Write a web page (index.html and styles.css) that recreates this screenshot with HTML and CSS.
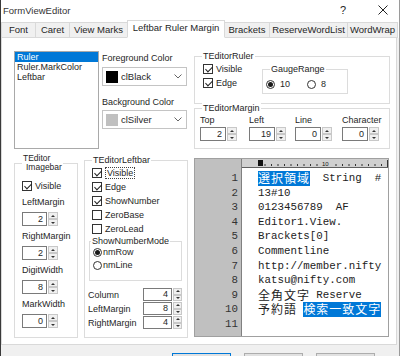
FILE: index.html
```html
<!DOCTYPE html>
<html lang="ja">
<head>
  <meta charset="UTF-8">
  <meta name="viewport" content="width=device-width, initial-scale=1.0">
  <title>FormViewEditor</title>
  <link rel="stylesheet" href="styles.css">
</head>
<body>
  <div class="window">
    <!-- title bar -->
    <div class="titlebar">
      <span class="title">FormViewEditor</span>
      <span class="help">?</span>
      <span class="close">
        <svg width="10" height="10" viewBox="0 0 10 10"><path d="M0.5 0.5L9.5 9.5M9.5 0.5L0.5 9.5" stroke="#222" stroke-width="1" fill="none"/></svg>
      </span>
    </div>

    <!-- tabs -->
    <div class="tabs">
      <div class="tab tab-font">Font</div>
      <div class="tab tab-caret">Caret</div>
      <div class="tab tab-marks">View Marks</div>
      <div class="tab tab-leftbar active">Leftbar Ruler Margin</div>
      <div class="tab tab-brackets">Brackets</div>
      <div class="tab tab-reserve">ReserveWordList</div>
      <div class="tab tab-wrap">WordWrap</div>
    </div>

    <div class="page">
      <div class="top-row">
        <div class="listbox">
          <div class="item selected">Ruler</div>
          <div class="item">Ruler.MarkColor</div>
          <div class="item">Leftbar</div>
        </div>

        <div class="colors">
          <div class="field-label">Foreground Color</div>
          <div class="combo">
            <span class="swatch black"></span>
            <span class="combo-text">clBlack</span>
            <svg class="chevron" width="8" height="5" viewBox="0 0 8 5"><polyline points="0.5,0.5 4,4 7.5,0.5" fill="none" stroke="#666" stroke-width="1"/></svg>
          </div>
          <div class="field-label second">Background Color</div>
          <div class="combo second">
            <span class="swatch silver"></span>
            <span class="combo-text">clSilver</span>
            <svg class="chevron" width="8" height="5" viewBox="0 0 8 5"><polyline points="0.5,0.5 4,4 7.5,0.5" fill="none" stroke="#666" stroke-width="1"/></svg>
          </div>
        </div>

        <div class="right-col">
          <div class="group ruler-group">
            <span class="group-label">TEditorRuler</span>
            <div class="checks">
              <div class="check-row"><span class="cb on"></span>Visible</div>
              <div class="check-row"><span class="cb on"></span>Edge</div>
            </div>
            <div class="group gauge">
              <span class="group-label">GaugeRange</span>
              <div class="radio-line">
                <span class="radio-opt first"><span class="rb on"></span>10</span>
                <span class="radio-opt"><span class="rb"></span>8</span>
              </div>
            </div>
          </div>

          <div class="group margin-group">
            <span class="group-label">TEditorMargin</span>
            <div class="margin-field w-top">
              <div class="field-label">Top</div>
              <div class="spin"><span class="spin-edit">2</span><span class="spin-btns"><span class="up"></span><span class="down"></span></span></div>
            </div>
            <div class="margin-field w-left">
              <div class="field-label">Left</div>
              <div class="spin"><span class="spin-edit">19</span><span class="spin-btns"><span class="up"></span><span class="down"></span></span></div>
            </div>
            <div class="margin-field w-line">
              <div class="field-label">Line</div>
              <div class="spin"><span class="spin-edit">0</span><span class="spin-btns"><span class="up"></span><span class="down"></span></span></div>
            </div>
            <div class="margin-field">
              <div class="field-label">Character</div>
              <div class="spin"><span class="spin-edit">0</span><span class="spin-btns"><span class="up"></span><span class="down"></span></span></div>
            </div>
          </div>
        </div>
      </div>

      <div class="bottom-row">
        <div class="group imagebar">
          <span class="group-label two-line"><span>TEditor</span><span class="indent">Imagebar</span></span>
          <div class="check-row"><span class="cb on"></span>Visible</div>
          <div class="field-label stacked">LeftMargin</div>
          <div class="spin small"><span class="spin-edit">2</span><span class="spin-btns"><span class="up"></span><span class="down"></span></span></div>
          <div class="field-label stacked">RightMargin</div>
          <div class="spin small"><span class="spin-edit">2</span><span class="spin-btns"><span class="up"></span><span class="down"></span></span></div>
          <div class="field-label stacked">DigitWidth</div>
          <div class="spin small"><span class="spin-edit">8</span><span class="spin-btns"><span class="up"></span><span class="down"></span></span></div>
          <div class="field-label stacked">MarkWidth</div>
          <div class="spin small"><span class="spin-edit">0</span><span class="spin-btns"><span class="up"></span><span class="down"></span></span></div>
        </div>

        <div class="group leftbar">
          <span class="group-label">TEditorLeftbar</span>
          <div class="check-row indent"><span class="cb on"></span><span class="focus">Visible</span></div>
          <div class="check-row indent"><span class="cb on"></span>Edge</div>
          <div class="check-row indent"><span class="cb on"></span>ShowNumber</div>
          <div class="check-row indent"><span class="cb"></span>ZeroBase</div>
          <div class="check-row indent"><span class="cb"></span>ZeroLead</div>
          <div class="group mode">
            <span class="group-label">ShowNumberMode</span>
            <div class="radio-row"><span class="rb on"></span>nmRow</div>
            <div class="radio-row"><span class="rb"></span>nmLine</div>
          </div>
          <div class="spin-row first">
            <span class="row-label">Column</span>
            <div class="spin wide"><span class="spin-edit">4</span><span class="spin-btns"><span class="up"></span><span class="down"></span></span></div>
          </div>
          <div class="spin-row">
            <span class="row-label">LeftMargin</span>
            <div class="spin wide"><span class="spin-edit">8</span><span class="spin-btns"><span class="up"></span><span class="down"></span></span></div>
          </div>
          <div class="spin-row">
            <span class="row-label">RightMargin</span>
            <div class="spin wide"><span class="spin-edit">4</span><span class="spin-btns"><span class="up"></span><span class="down"></span></span></div>
          </div>
        </div>

        <div class="editor">
          <div class="gutter">
            <div class="line">1</div><div class="line">2</div><div class="line">3</div>
            <div class="line">4</div><div class="line">5</div><div class="line">6</div>
            <div class="line">7</div><div class="line">8</div><div class="line">9</div>
            <div class="line">10</div><div class="line">11</div>
          </div>
          <div class="editor-main">
            <div class="ruler">
              <svg width="146" height="8" viewBox="0 0 146 8">
                <rect x="16" y="1" width="5" height="6" fill="#111"/>
                <text x="80" y="6.5" font-size="6" font-family="Liberation Sans, sans-serif" fill="#111">10</text>
                <g stroke="#333" stroke-width="1">
                  <line x1="23" y1="5" x2="23" y2="7"/><line x1="29.5" y1="5" x2="29.5" y2="7"/>
                  <line x1="36" y1="5" x2="36" y2="7"/><line x1="42.5" y1="5" x2="42.5" y2="7"/>
                  <line x1="49" y1="5" x2="49" y2="7"/><line x1="55.5" y1="5" x2="55.5" y2="7"/>
                  <line x1="62" y1="5" x2="62" y2="7"/><line x1="68.5" y1="5" x2="68.5" y2="7"/>
                  <line x1="75" y1="5" x2="75" y2="7"/>
                  <line x1="94" y1="5" x2="94" y2="7"/><line x1="100.5" y1="5" x2="100.5" y2="7"/>
                  <line x1="107" y1="5" x2="107" y2="7"/><line x1="113.5" y1="5" x2="113.5" y2="7"/>
                  <line x1="120" y1="5" x2="120" y2="7"/><line x1="126.5" y1="5" x2="126.5" y2="7"/>
                  <line x1="133" y1="5" x2="133" y2="7"/><line x1="139.5" y1="5" x2="139.5" y2="7"/>
                  <line x1="145.5" y1="1" x2="145.5" y2="8"/>
                </g>
              </svg>
            </div>
            <div class="code">
              <div class="line"><span class="cjk sel">選択領域</span>  String  #</div>
              <div class="line">13#10</div>
              <div class="line">0123456789  AF</div>
              <div class="line">Editor1.View.</div>
              <div class="line">Brackets[0]</div>
              <div class="line">Commentline</div>
              <div class="line">http://member.nifty</div>
              <div class="line">katsu@nifty.com</div>
              <div class="line"><span class="cjk">全角文字</span> Reserve</div>
              <div class="line"><span class="cjk">予約語</span> <span class="cjk sel">検索一致文字</span></div>
              <div class="line"></div>
            </div>
          </div>
        </div>
      </div>
    </div>

    <div class="button-bar">
      <span class="btn default"></span>
      <span class="btn"></span>
      <span class="btn"></span>
    </div>
  </div>
</body>
</html>
```

FILE: styles.css
```css
* {
  box-sizing: border-box;
}
body {
  margin: 0;
  font-family: "Liberation Sans", Arial, sans-serif;
  font-size: 9px;
  color: #262626;
  background: #fff;
}
.window {
  width: 400px;
  height: 356px;
  overflow: hidden;
  background: #f0f0f0;
  border-left: 1px solid #3a3a3a;
  border-right: 1px solid #9a9a9a;
}

/* title bar */
.titlebar {
  height: 20px;
  background: #fff;
  display: flex;
  align-items: center;
  padding: 0 6px 0 2px;
  font-size: 9.5px;
}
.title {
  color: #333;
}
.help {
  margin-left: auto;
  width: 20px;
  text-align: center;
  font-size: 11px;
}
.close {
  width: 20px;
  margin-left: 20px;
  display: flex;
  justify-content: center;
}

/* tabs */
.tabs {
  height: 18px;
  display: flex;
  align-items: flex-end;
  background: #fff;
  margin-bottom: -1px;
  position: relative;
  z-index: 1;
  font-size: 9.5px;
}
.tab {
  height: 16px;
  line-height: 14px;
  text-align: center;
  border: 1px solid #d9d9d9;
  background: #f0f0f0;
  margin-right: -1px;
  white-space: nowrap;
}
.tab.active {
  height: 18px;
  background: #fff;
  border-bottom-color: #fff;
  position: relative;
  z-index: 2;
}
.tab-font { width: 35px; }
.tab-caret { width: 35px; }
.tab-marks { width: 59px; }
.tab-leftbar { width: 98px; }
.tab-brackets { width: 46px; }
.tab-reserve { width: 79px; }
.tab-wrap { width: 51px; }

/* page */
.page {
  width: 396px;
  height: 308px;
  background: #fff;
  border: 1px solid #d9d9d9;
}
.top-row {
  height: 111px;
  display: flex;
  align-items: flex-start;
  padding-left: 12px;
}
.bottom-row {
  display: flex;
  align-items: flex-start;
  padding-left: 12px;
}
.field-label {
  line-height: 12px;
  white-space: nowrap;
}

/* list box */
.listbox {
  margin-top: 13px;
  width: 85px;
  height: 98px;
  border: 1px solid #a9a9a9;
}
.item {
  height: 10px;
  line-height: 10px;
  padding-left: 2px;
}
.item.selected {
  background: #0078d7;
  color: #fff;
}

/* colour combos */
.colors {
  margin-top: 14px;
  margin-left: 3px;
  width: 85px;
}
.combo {
  margin-top: 3px;
  height: 19px;
  border: 1px solid #c4c4c4;
  display: flex;
  align-items: center;
  padding-left: 3px;
}
.combo.second {
  margin-top: 2px;
}
.field-label.second {
  margin-top: 10px;
}
.swatch {
  width: 12px;
  height: 12px;
  margin-right: 3px;
}
.swatch.black {
  background: #000;
}
.swatch.silver {
  background: #c0c0c0;
}
.combo-text {
  font-size: 9.5px;
}
.chevron {
  margin-left: auto;
  margin-right: 4px;
}

/* group boxes */
.group {
  position: relative;
  border: 1px solid #dcdcdc;
}
.group-label {
  position: absolute;
  top: -7px;
  left: 7px;
  padding: 0 1px;
  line-height: 12px;
  background: #fff;
  white-space: nowrap;
}
.right-col {
  margin-left: 7px;
  width: 196px;
}
.ruler-group {
  margin-top: 18px;
  height: 48px;
  display: flex;
  padding: 6px 0 0 8px;
}
.checks {
  width: 59px;
}
.check-row {
  height: 12px;
  margin-bottom: 2px;
  display: flex;
  align-items: center;
  white-space: nowrap;
}
.cb {
  position: relative;
  width: 10px;
  height: 10px;
  border: 1px solid #333;
  background: #fff;
  margin-right: 3px;
  flex: none;
}
.cb.on::after {
  content: "";
  position: absolute;
  left: 2.5px;
  top: 0;
  width: 3px;
  height: 6px;
  border: solid #222;
  border-width: 0 1px 1px 0;
  transform: rotate(45deg);
}
.focus {
  border: 1px dotted #444;
  line-height: 10px;
  padding: 0 1px;
}
.gauge {
  margin-top: 6px;
  width: 86px;
  height: 25px;
  padding: 8px 0 0 3px;
}
.radio-line {
  display: flex;
  height: 12px;
  align-items: center;
}
.radio-opt {
  display: flex;
  align-items: center;
}
.radio-opt.first {
  width: 41px;
}
.rb {
  width: 9px;
  height: 9px;
  border: 1px solid #333;
  border-radius: 50%;
  margin-right: 5px;
  display: flex;
  align-items: center;
  justify-content: center;
  flex: none;
}
.rb.on::after {
  content: "";
  width: 5px;
  height: 5px;
  border-radius: 50%;
  background: #1a1a1a;
}
.margin-group {
  margin-top: 4px;
  height: 41px;
  display: flex;
  padding: 5px 0 0 5px;
}
.margin-field {
  width: 40px;
}
.w-top { width: 49px; }
.w-left { width: 46px; }
.w-line { width: 47px; }

/* spin edits */
.spin {
  margin-top: 1px;
  display: flex;
  width: 37px;
  height: 14px;
}
.spin-edit {
  flex: 1;
  border: 1px solid #7a7a7a;
  background: #fff;
  text-align: right;
  padding-right: 3px;
  line-height: 12px;
}
.spin-btns {
  width: 10px;
  margin-left: 1px;
  display: flex;
  flex-direction: column;
}
.spin-btns span {
  flex: 1;
  border: 1px solid #c8c8c8;
  background: #f0f0f0;
  display: flex;
  align-items: center;
  justify-content: center;
}
.spin-btns .up::after {
  content: "";
  border-left: 2px solid transparent;
  border-right: 2px solid transparent;
  border-bottom: 2px solid #333;
}
.spin-btns .down::after {
  content: "";
  border-left: 2px solid transparent;
  border-right: 2px solid transparent;
  border-top: 2px solid #333;
}
.spin.small {
  width: 36px;
  margin-top: 4px;
}
.spin.wide {
  width: 39px;
  height: 13px;
  margin-top: 0;
}
.spin.wide .spin-edit {
  line-height: 11px;
}
.spin.wide .spin-btns {
  width: 9px;
}

/* imagebar group */
.imagebar {
  margin-top: 14px;
  width: 64px;
  height: 175px;
  padding: 16px 0 0 7px;
}
.group-label.two-line {
  top: -10px;
  left: 7px;
  line-height: 9px;
  font-size: 8.5px;
}
.two-line span {
  display: block;
}
.two-line .indent {
  padding-left: 3px;
}
.field-label.stacked {
  margin-top: 4px;
}
.imagebar .check-row {
  margin-bottom: 1px;
}

/* leftbar group */
.leftbar {
  margin-left: 6px;
  margin-top: 11px;
  width: 104px;
  height: 178px;
  padding: 6px 5px 0 3px;
}
.check-row.indent {
  margin-left: 4px;
}
.mode {
  margin-top: 6px;
  margin-left: 1px;
  width: 93px;
  height: 40px;
  padding: 4px 0 0 3px;
}
.mode .group-label {
  left: 1px;
}
.radio-row {
  height: 12px;
  margin-bottom: 1px;
  display: flex;
  align-items: center;
}
.radio-row .rb {
  margin-right: 1px;
}
.spin-row {
  height: 13px;
  margin-bottom: 1px;
  display: flex;
  align-items: center;
}
.spin-row.first {
  margin-top: 7px;
}
.row-label {
  flex: 1;
  white-space: nowrap;
}

/* editor preview */
.editor {
  margin-left: 6px;
  margin-top: 9px;
  width: 195px;
  height: 179px;
  border: 1px solid #a0a0a0;
  display: flex;
  font-family: "Liberation Mono", "Courier New", monospace;
  font-size: 10.8px;
  color: #222;
  overflow: hidden;
}
.line {
  height: 14.6px;
  line-height: 14.6px;
  white-space: pre;
}
.gutter {
  width: 46px;
  background: #c0c0c0;
  padding: 12px 3px 0 0;
  text-align: right;
  color: #333;
}
.editor-main {
  flex: 1;
  border-left: 1px solid #808080;
  overflow: hidden;
}
.ruler {
  height: 9px;
  background: #d0d0d0;
  border-bottom: 1px solid #606060;
}
.ruler svg {
  display: block;
}
.code {
  padding: 3px 0 0 16px;
}
.cjk {
  display: inline-block;
  vertical-align: top;
  height: 14.6px;
  line-height: 14.6px;
  font-family: "Noto Sans CJK JP", sans-serif;
  font-size: 12px;
  letter-spacing: 0.96px;
}
.sel {
  background: #0078d7;
  color: #fff;
}

/* bottom buttons */
.button-bar {
  display: flex;
  padding-left: 171px;
}
.btn {
  width: 59px;
  height: 22px;
  margin-top: 8px;
  margin-right: 13px;
  border: 1px solid #adadad;
  background: #e1e1e1;
}
.btn.default {
  border-color: #0078d7;
}
```
